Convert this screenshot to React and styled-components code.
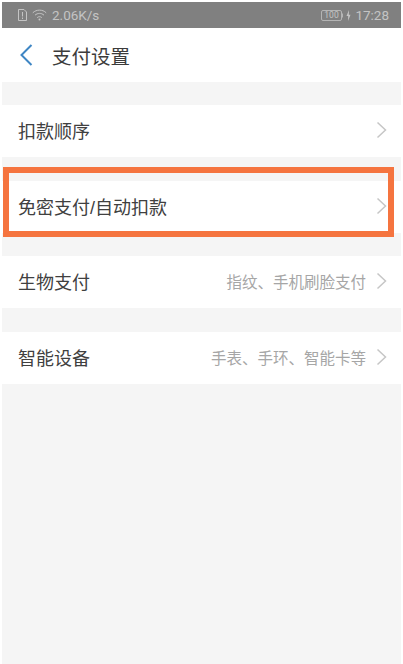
import React from "react";
import styled, { createGlobalStyle } from "styled-components";

const GlobalStyle = createGlobalStyle`
  html, body {
    margin: 0;
    padding: 0;
    background: #fff;
  }
  body {
    font-family: "Liberation Sans", "Noto Sans CJK SC", sans-serif;
  }
`;

const Page = styled.div`
  position: relative;
  width: 403px;
  height: 664px;
  overflow: hidden;
  padding: 2px 2px 0 2px;
  box-sizing: border-box;
  display: flex;
  flex-direction: column;
  background: #fff;
`;

const StatusBar = styled.div`
  height: 26px;
  flex: none;
  background: #808080;
  color: #c4c4c4;
  display: flex;
  align-items: center;
  justify-content: space-between;
  padding: 0 12px 0 16px;
  font-size: 13.5px;
  font-family: "Roboto", sans-serif;
`;

const StatusGroup = styled.div`
  display: flex;
  align-items: center;
  gap: ${(props) => props.gap || 5}px;
`;

const Clock = styled.span`
  margin-left: 2px;
`;

const NavBar = styled.div`
  height: 54px;
  flex: none;
  background: #fff;
  display: flex;
  align-items: center;
  padding-left: 18px;
  gap: 19px;
`;

const Title = styled.div`
  font-size: 19.5px;
  color: #3c3c3c;
`;

const Content = styled.div`
  flex: 1;
  background: #f5f5f5;
  padding-top: 23px;
  display: flex;
  flex-direction: column;
  gap: 23.5px;
`;

const Row = styled.div`
  height: 52px;
  background: #fff;
  display: flex;
  align-items: center;
  padding: 0 14px 2px 16px;
  box-sizing: border-box;
`;

const RowLabel = styled.div`
  flex: 1;
  font-size: 18px;
  color: #404040;
`;

const RowValue = styled.div`
  font-size: 15.5px;
  color: #a6a6a6;
  margin-right: 10px;
`;

const Highlight = styled.div`
  position: absolute;
  left: 3px;
  top: 167px;
  width: 391px;
  height: 70px;
  box-sizing: border-box;
  border: 6px solid #f5743f;
`;

function Chevron() {
  return (
    <svg width="11" height="18" viewBox="0 0 11 18" fill="none">
      <path d="M1.5 1.5 L9.5 9 L1.5 16.5" stroke="#c6c6c6" strokeWidth="1.5" />
    </svg>
  );
}

function BackIcon() {
  return (
    <svg width="13" height="22" viewBox="0 0 13 22" fill="none">
      <path d="M11.5 1 L1.5 11 L11.5 21" stroke="#3f86c4" strokeWidth="2" />
    </svg>
  );
}

function SimIcon() {
  return (
    <svg width="9" height="12" viewBox="0 0 9 12" fill="none">
      <path d="M0.5 0.5 H6 L8.5 3 V11.5 H0.5 Z" stroke="#c4c4c4" />
      <path d="M4.5 3 V7.5 M4.5 8.5 V10" stroke="#c4c4c4" />
    </svg>
  );
}

function WifiIcon() {
  return (
    <svg width="15" height="12" viewBox="0 0 15 12" fill="none">
      <path d="M0.8 3.8 C4.5 0.2 10.5 0.2 14.2 3.8" stroke="#c4c4c4" />
      <path d="M3 6.2 C5.5 3.8 9.5 3.8 12 6.2" stroke="#c4c4c4" />
      <path d="M5.2 8.6 C6.5 7.4 8.5 7.4 9.8 8.6" stroke="#c4c4c4" />
      <circle cx="7.5" cy="10.6" r="1" fill="#c4c4c4" />
    </svg>
  );
}

function BatteryIcon() {
  return (
    <svg width="23" height="11" viewBox="0 0 23 11" fill="none">
      <rect x="0.5" y="0.5" width="20" height="10" rx="1.5" stroke="#b4b4b4" />
      <path d="M21.5 3.5 V7.5" stroke="#b4b4b4" />
      <text x="10.5" y="8.4" textAnchor="middle" fontSize="8.5" fill="#c4c4c4" fontFamily="Roboto, sans-serif">
        100
      </text>
    </svg>
  );
}

function BoltIcon() {
  return (
    <svg width="5" height="11" viewBox="0 0 5 11">
      <path d="M3 0 L0.5 6 H2.2 L2 11 L4.5 4.8 H2.8 Z" fill="#c4c4c4" />
    </svg>
  );
}

const rows = [
  { label: "扣款顺序" },
  { label: "免密支付/自动扣款" },
  { label: "生物支付", value: "指纹、手机刷脸支付" },
  { label: "智能设备", value: "手表、手环、智能卡等" },
];

export default function App() {
  return (
    <Page>
      <GlobalStyle />
      <StatusBar>
        <StatusGroup>
          <SimIcon />
          <WifiIcon />
          <span>2.06K/s</span>
        </StatusGroup>
        <StatusGroup gap={2}>
          <BatteryIcon />
          <BoltIcon />
          <Clock>17:28</Clock>
        </StatusGroup>
      </StatusBar>
      <NavBar>
        <BackIcon />
        <Title>支付设置</Title>
      </NavBar>
      <Content>
        {rows.map((row) => (
          <Row key={row.label}>
            <RowLabel>{row.label}</RowLabel>
            {row.value && <RowValue>{row.value}</RowValue>}
            <Chevron />
          </Row>
        ))}
      </Content>
      <Highlight />
    </Page>
  );
}
